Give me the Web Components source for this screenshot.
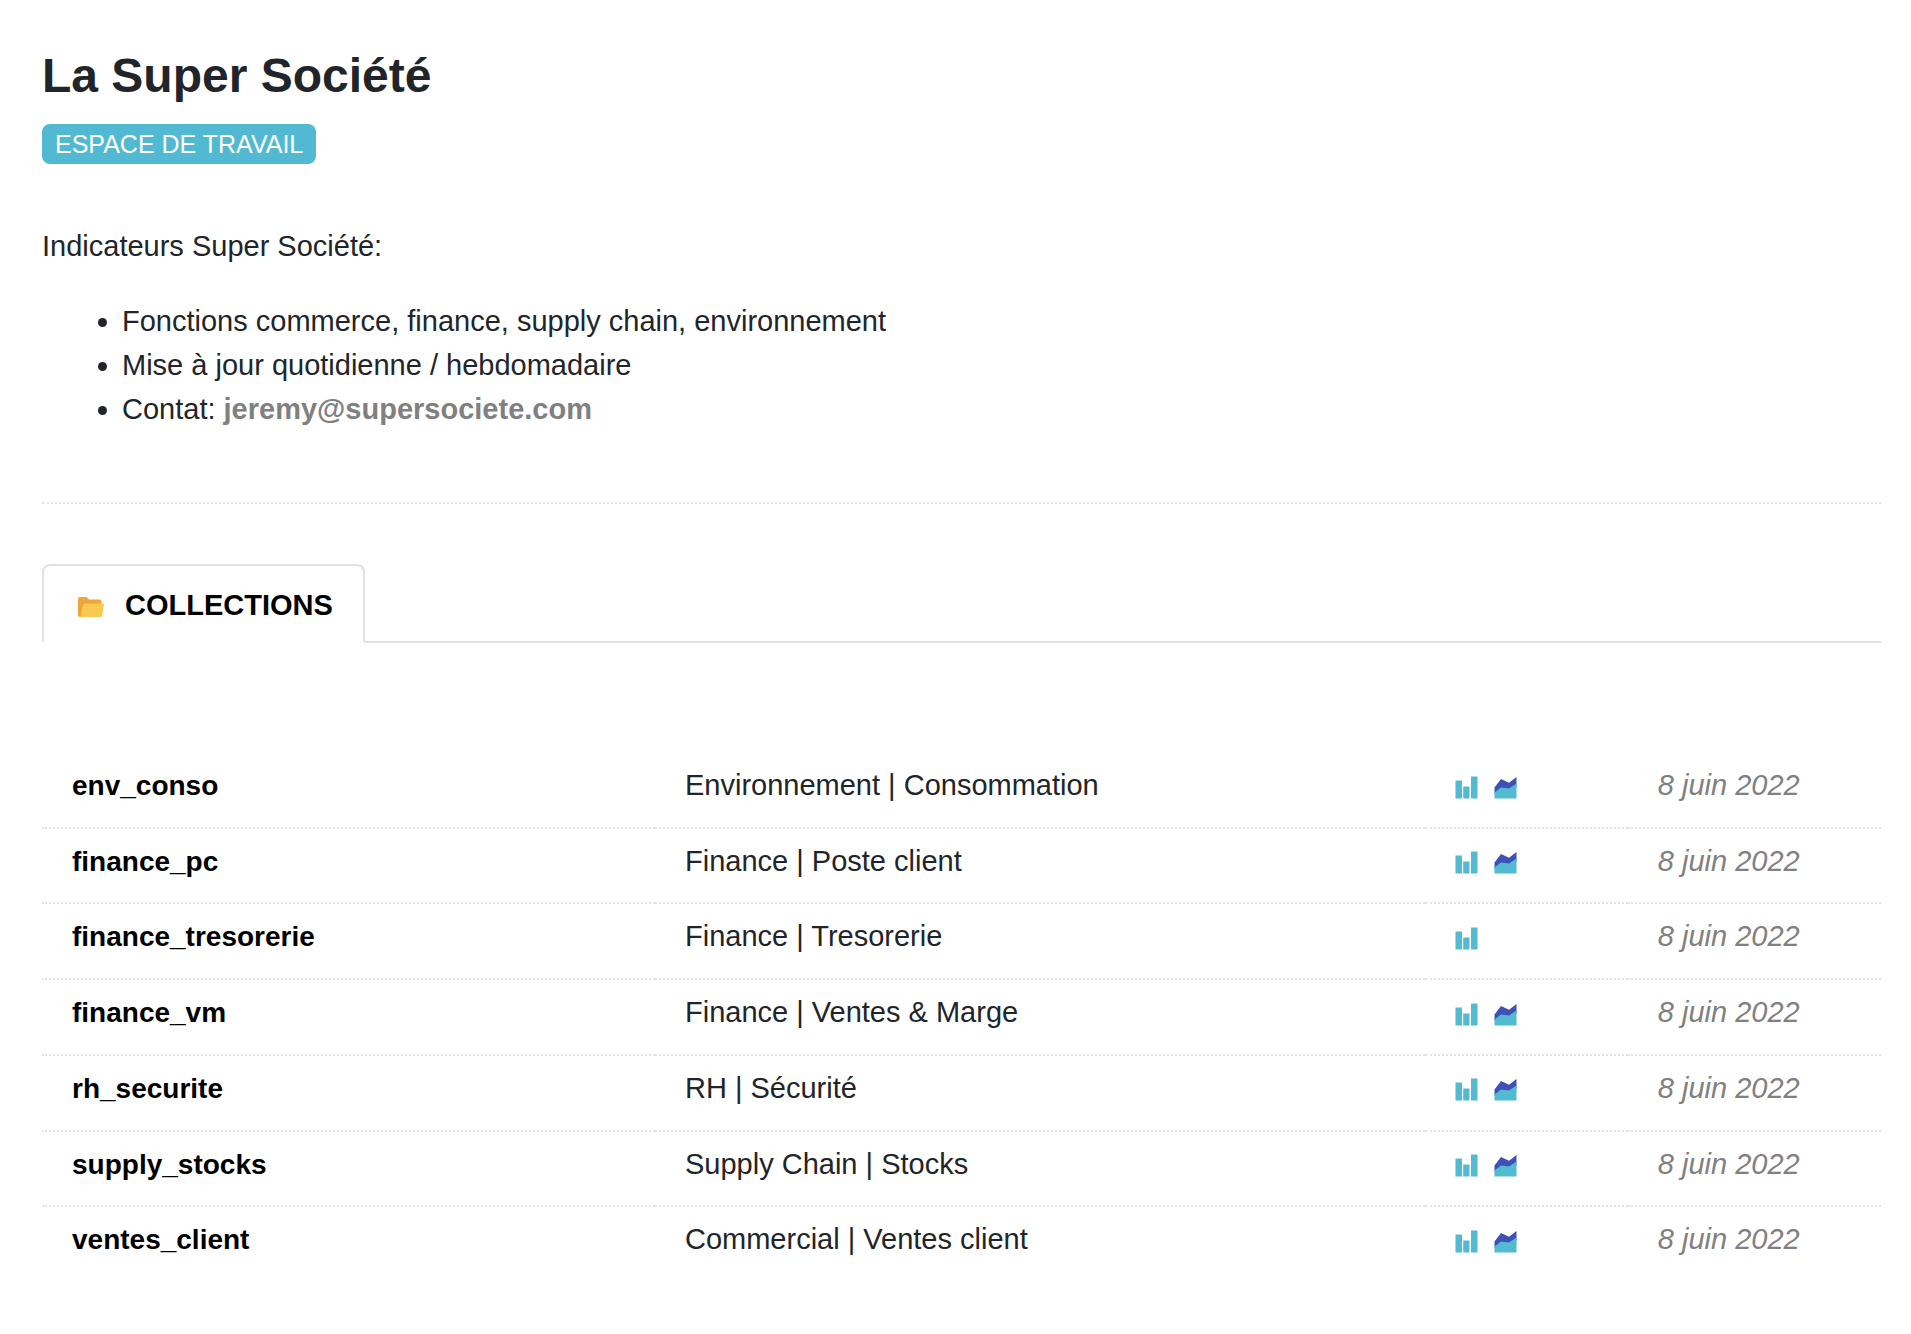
<!DOCTYPE html>
<html lang="fr">
<head>
<meta charset="utf-8">
<title>La Super Société</title>
<style>
  body {
    margin: 0;
    background: #fff;
    color: #212529;
    font: 29px/44px "Helvetica Neue", "Liberation Sans", Arial, sans-serif;
    --accent: #52b9d3;
    --muted: #808080;
    --dotted: #e3e3e3;
    --line: #dee2e6;
  }
</style>
</head>
<body>
<workspace-page>
  <workspace-header slot="header" label="ESPACE DE TRAVAIL">La Super Société</workspace-header>
  <workspace-intro slot="intro" mail="jeremy@supersociete.com">Indicateurs Super Société:</workspace-intro>
  <tab-bar label="COLLECTIONS"></tab-bar>
  <collection-table></collection-table>
</workspace-page>

<script>
class BaseElement extends HTMLElement {
  connectedCallback() {
    if (this.shadowRoot) return;
    this.attachShadow({ mode: "open" }).innerHTML =
      `<style>*{box-sizing:border-box}:host{display:block}</style>` + this.render();
  }
}

customElements.define("workspace-page", class extends BaseElement {
  render() {
    return `
      <style>
        main { display: flex; flex-direction: column; padding: 47px 30px 40px 42px; }
        .intro { padding: 60px 0 71px; border-bottom: 2px dotted var(--dotted); margin-bottom: 60px; }
      </style>
      <main>
        <slot name="header"></slot>
        <div class="intro"><slot name="intro"></slot></div>
        <slot></slot>
      </main>`;
  }
});

customElements.define("workspace-header", class extends BaseElement {
  render() {
    return `
      <style>
        :host { display: flex; flex-direction: column; align-items: flex-start; gap: 19px; }
        h1 { margin: 0; font-size: 48px; line-height: 58px; font-weight: 700; }
        .badge { padding: 0 13px; border-radius: 8px; background: var(--accent); color: #fff;
                 font-size: 25px; line-height: 40px; }
      </style>
      <h1><slot></slot></h1>
      <span class="badge">${this.getAttribute("label")}</span>`;
  }
});

customElements.define("workspace-intro", class extends BaseElement {
  render() {
    const mail = this.getAttribute("mail");
    return `
      <style>
        p { margin: 0 0 31px; }
        ul { margin: 0; padding: 0 0 0 80px; }
        a { color: var(--muted); font-weight: 700; text-decoration: none; }
      </style>
      <p><slot></slot></p>
      <ul>
        <li>Fonctions commerce, finance, supply chain, environnement</li>
        <li>Mise à jour quotidienne / hebdomadaire</li>
        <li>Contat: <a href="mailto:${mail}">${mail}</a></li>
      </ul>`;
  }
});

customElements.define("icon-folder", class extends BaseElement {
  render() {
    return `
      <style>svg { display: block; width: 26px; height: 20px; }</style>
      <svg viewBox="0 0 26 20" aria-hidden="true">
        <path fill="#f2a33c" d="M2 0H8.500L11 2.500H21.500Q23.500 2.500 23.500 4.500V17L3 20H2Q0 20 0 18V2Q0 0 2 0Z"/>
        <path fill="#f8ca50" d="M7 6.500H24.500Q26.200 6.500 25.900 8L24.200 18.500Q23.900 20 22.500 20H2.500L5 8Q5.400 6.500 7 6.500Z"/>
      </svg>`;
  }
});

customElements.define("icon-bars", class extends BaseElement {
  render() {
    return `
      <style>svg { display: block; width: 23px; height: 23px; }</style>
      <svg viewBox="0 0 23 23" role="img" aria-label="Tableau">
        <path fill="#52bbd2" d="M.5 4.500H7V22.500H.5ZM8.200 10.500H14.500V22.500H8.200ZM16 .5H22.500V22.500H16Z"/>
      </svg>`;
  }
});

customElements.define("icon-area", class extends BaseElement {
  render() {
    return `
      <style>svg { display: block; width: 23px; height: 23px; }</style>
      <svg viewBox="0 0 23 23" role="img" aria-label="Graphique">
        <path fill="#3f51b5" d="M.5 11.500L7 3L15 6.800L22.500 1V11L15 14L7 13.500L.5 18Z"/>
        <path fill="#52bbd2" d="M.5 16.500L7 11.500L15 12.500L22.500 7.500V22.500H.5Z"/>
      </svg>`;
  }
});

customElements.define("tab-bar", class extends BaseElement {
  render() {
    return `
      <style>
        nav { display: flex; border-bottom: 2px solid var(--line); }
        button { display: flex; align-items: center; gap: 21px; margin: 0 0 -2px; padding: 17px 30px 14px 34px;
                 border: 2px solid var(--line); border-bottom-color: #fff; border-radius: 8px 8px 0 0;
                 background: #fff; color: #000; font: inherit; font-weight: 700; }
        icon-folder { padding-top: 3px; }
      </style>
      <nav role="tablist">
        <button type="button" role="tab" aria-selected="true"><icon-folder></icon-folder>${this.getAttribute("label")}</button>
      </nav>`;
  }
});

customElements.define("collection-table", class extends BaseElement {
  render() {
    const date = "8 juin 2022";
    const rows = [
      ["env_conso", "Environnement | Consommation", true],
      ["finance_pc", "Finance | Poste client", true],
      ["finance_tresorerie", "Finance | Tresorerie", false],
      ["finance_vm", "Finance | Ventes &amp; Marge", true],
      ["rh_securite", "RH | Sécurité", true],
      ["supply_stocks", "Supply Chain | Stocks", true],
      ["ventes_client", "Commercial | Ventes client", true],
    ];
    return `
      <style>
        :host { margin-top: 110px; }
        table { width: 100%; height: 528px; table-layout: fixed; border-collapse: collapse; }
        td { padding: 10px 0 18px 30px; vertical-align: top; }
        tr:not(:last-child) { border-bottom: 2px dotted var(--dotted); }
        .name { width: 33.333%; }
        .desc { width: 41.86%; }
        .kind { width: 11.04%; }
        a { color: #000; font-size: 28px; font-weight: 700; text-decoration: none; }
        .icons { display: flex; align-items: center; gap: 16px; height: 44px; padding-top: 4px; }
        time { color: var(--muted); font-style: italic; }
      </style>
      <table>
        <colgroup><col class="name"><col class="desc"><col class="kind"><col></colgroup>
        <tbody>${rows.map(([name, text, area]) => `
          <tr>
            <td><a href="#${name}">${name}</a></td>
            <td>${text}</td>
            <td><div class="icons"><icon-bars></icon-bars>${area ? "<icon-area></icon-area>" : ""}</div></td>
            <td><time datetime="2022-06-08">${date}</time></td>
          </tr>`).join("")}
        </tbody>
      </table>`;
  }
});
</script>
</body>
</html>
